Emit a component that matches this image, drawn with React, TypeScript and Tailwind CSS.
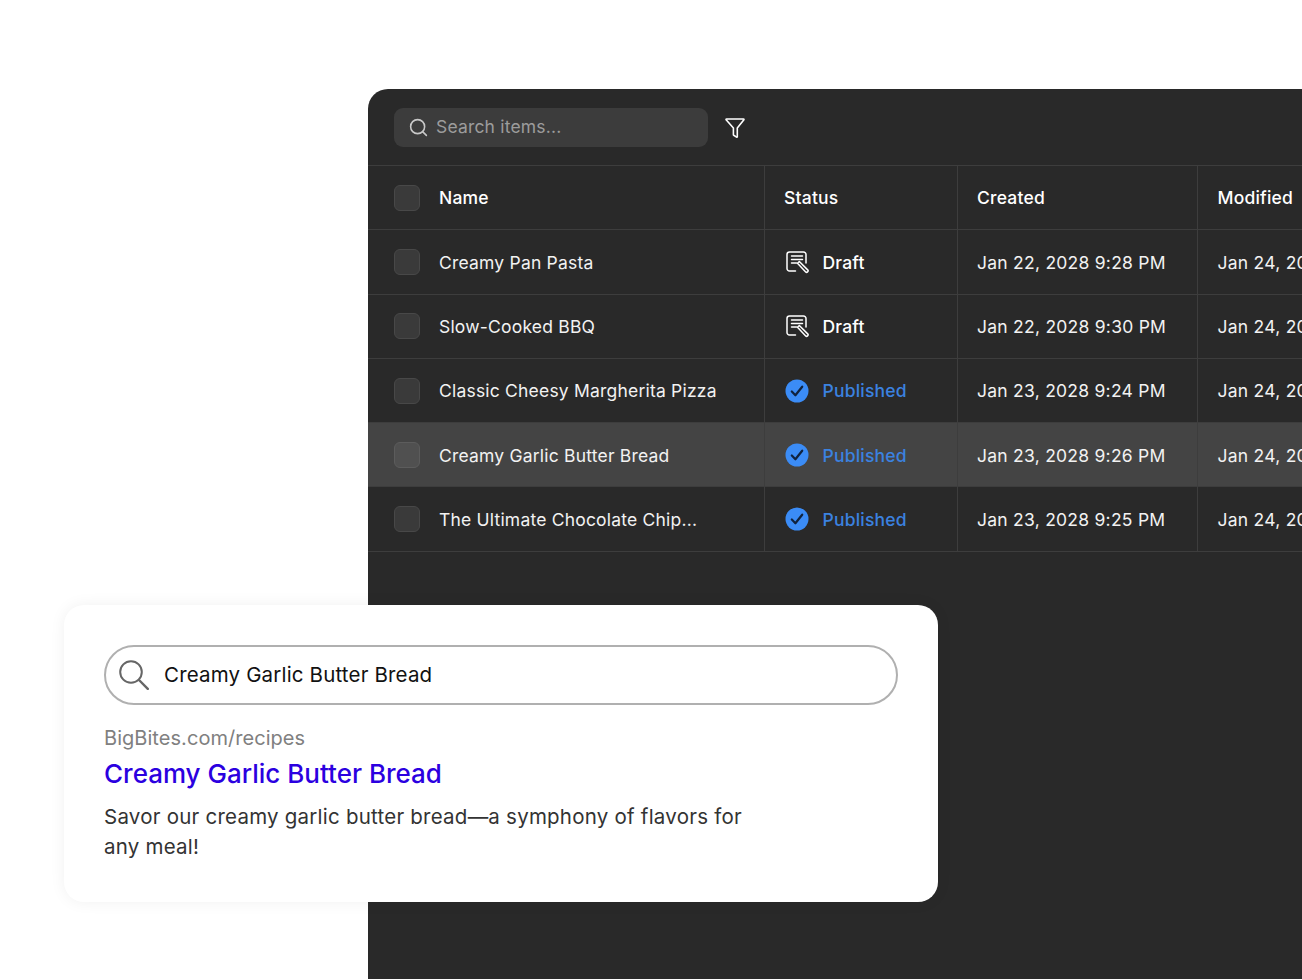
import { Search } from "lucide-react";

type Row = {
  name: string;
  status: "Draft" | "Published";
  created: string;
  hover?: boolean;
};

const rows: Row[] = [
  { name: "Creamy Pan Pasta", status: "Draft", created: "Jan 22, 2028 9:28 PM" },
  { name: "Slow-Cooked BBQ", status: "Draft", created: "Jan 22, 2028 9:30 PM" },
  { name: "Classic Cheesy Margherita Pizza", status: "Published", created: "Jan 23, 2028 9:24 PM" },
  { name: "Creamy Garlic Butter Bread", status: "Published", created: "Jan 23, 2028 9:26 PM", hover: true },
  { name: "The Ultimate Chocolate Chip...", status: "Published", created: "Jan 23, 2028 9:25 PM" },
];

const DraftIcon = () => (
  <svg width="24" height="24" viewBox="0 0 24 24" fill="none" stroke="#fff" strokeWidth="1.5" strokeLinecap="round" strokeLinejoin="round">
    <path d="M10.500 21H4.500A2.500 2.500 0 0 1 2 18.500V4.500A2.500 2.500 0 0 1 4.500 2h14A2.500 2.500 0 0 1 21 4.500V13" />
    <path d="M6.500 6h11M6.500 9.500h11M6.500 13h5" />
    <path d="M12.500 13.200l1.800-1.700 8.400 8.400c.5.500.5 1.300 0 1.800l-.2.200c-.5.500-1.300.5-1.800 0l-8.200-8.700z" />
  </svg>
);

const PublishedIcon = () => (
  <svg width="24" height="24" viewBox="0 0 24 24" fill="none">
    <circle cx="12" cy="12" r="11.500" fill="#3b8cf6" />
    <path d="M6.800 12.500l3.600 3.800 6.800-8.600" stroke="#10233f" strokeWidth="2.200" strokeLinecap="round" strokeLinejoin="round" />
  </svg>
);

const FilterIcon = () => (
  <svg width="20" height="22" viewBox="0 0 20 22" fill="none" stroke="#fff" strokeWidth="1.600" strokeLinejoin="round" className="mt-[2px]">
    <path d="M1.500 2h17c.4 0 .6.400.4.700L12.300 11v8.700c0 .4-.4.600-.7.400l-2.900-1.800c-.2-.1-.3-.3-.3-.5V11L1.100 2.700C.9 2.400 1.100 2 1.500 2z" />
  </svg>
);

const LensIcon = () => (
  <svg width="30" height="30" viewBox="0 0 30 30" fill="none" stroke="#666666" strokeWidth="2" strokeLinecap="round" className="shrink-0">
    <circle cx="12" cy="12" r="10.800" />
    <path d="M20 20l8.800 8.800" strokeWidth="2.400" />
  </svg>
);

const Checkbox = ({ hover }: { hover?: boolean }) => (
  <div className={`h-[26px] w-[26px] shrink-0 rounded-[6px] border-[1.5px] ${hover ? "border-[#5c5c5c] bg-[#505050]" : "border-[#484848] bg-[#3a3a3a]"}`} />
);

export default function App() {
  return (
    <div className="relative h-[980px] w-[1302px] overflow-hidden bg-white pl-[368px] pt-[89px] font-['Inter',sans-serif]">
      <div className="h-[890px] w-[934px] overflow-hidden rounded-tl-[20px] bg-[#292929] text-white">
        <div className="flex h-[77px] items-center gap-[17px] border-b border-[#3d3d3d] pl-[26px]">
          <div className="flex h-[39px] w-[314px] items-center gap-[7px] rounded-[9px] bg-[#3c3c3c] pl-[14px]">
            <Search className="h-[21px] w-[21px] text-[#c8c8c8]" strokeWidth={1.8} />
            <span className="pt-[1px] text-[17.500px] tracking-[0.18px] text-[#9c9c9c]">Search items...</span>
          </div>
          <FilterIcon />
        </div>

        <div className="flex h-[64.300px] items-center border-b border-[#3d3d3d] text-[17.500px] font-[450] tracking-[0.2px]">
          <div className="flex h-full w-[395.500px] shrink-0 items-center gap-[19px] pl-[26px]">
            <Checkbox />
            <span>Name</span>
          </div>
          <div className="flex h-full w-[193px] shrink-0 items-center border-l border-[#3d3d3d] pl-[19.500px]">Status</div>
          <div className="flex h-full w-[240.500px] shrink-0 items-center border-l border-[#3d3d3d] pl-[19.500px]">Created</div>
          <div className="flex h-full flex-1 items-center border-l border-[#3d3d3d] pl-[19.500px]">Modified</div>
        </div>

        {rows.map((row) => (
          <div
            key={row.name}
            className={`flex h-[64.300px] items-center border-b border-[#3d3d3d] whitespace-nowrap text-[17.500px] tracking-[0.2px] ${row.hover ? "bg-[#444444]" : ""}`}
          >
            <div className="flex h-full w-[395.500px] shrink-0 items-center gap-[19px] pl-[26px]">
              <Checkbox hover={row.hover} />
              <span className="pt-[2px] text-[#f2f2f2]">{row.name}</span>
            </div>
            <div className="flex h-full w-[193px] shrink-0 items-center gap-[14px] border-l border-[#3d3d3d] pl-[20px]">
              {row.status === "Draft" ? <DraftIcon /> : <PublishedIcon />}
              <span className={row.status === "Draft" ? "pt-[2px] font-[450] text-white" : "pt-[2px] font-[450] text-[#3b82e0]"}>{row.status}</span>
            </div>
            <div className="flex h-full w-[240.500px] shrink-0 items-center border-l border-[#3d3d3d] pl-[19.500px] pt-[2px] tracking-[0.25px] text-[#f2f2f2]">{row.created}</div>
            <div className="flex h-full flex-1 items-center border-l border-[#3d3d3d] pl-[19.500px] pt-[2px] tracking-[0.25px] text-[#f2f2f2]">Jan 24, 2028 9:30 PM</div>
          </div>
        ))}
      </div>

      <div className="absolute left-[64px] top-[605px] h-[297px] w-[874px] rounded-[20px] bg-white px-[40px] pt-[40px] shadow-[0_0_16px_rgba(0,0,0,0.06)]">
        <div className="flex h-[60px] items-center gap-[15px] rounded-full border-2 border-[#b0b0b0] pl-[13px]">
          <LensIcon />
          <span className="text-[20.500px] tracking-[0.17px] text-[#111111]">Creamy Garlic Butter Bread</span>
        </div>
        <div className="mt-[20px] text-[20px] leading-[26px] tracking-[0.05px] text-[#808080]">BigBites.com/recipes</div>
        <div className="mt-[7px] text-[26px] font-medium leading-[32px] text-[#2b00e0]">Creamy Garlic Butter Bread</div>
        <p className="mt-[12px] w-[650px] text-[20.500px] leading-[30px] tracking-[0.23px] text-[#333333]">
          Savor our creamy garlic butter bread—a symphony of flavors for any meal!
        </p>
      </div>
    </div>
  );
}
